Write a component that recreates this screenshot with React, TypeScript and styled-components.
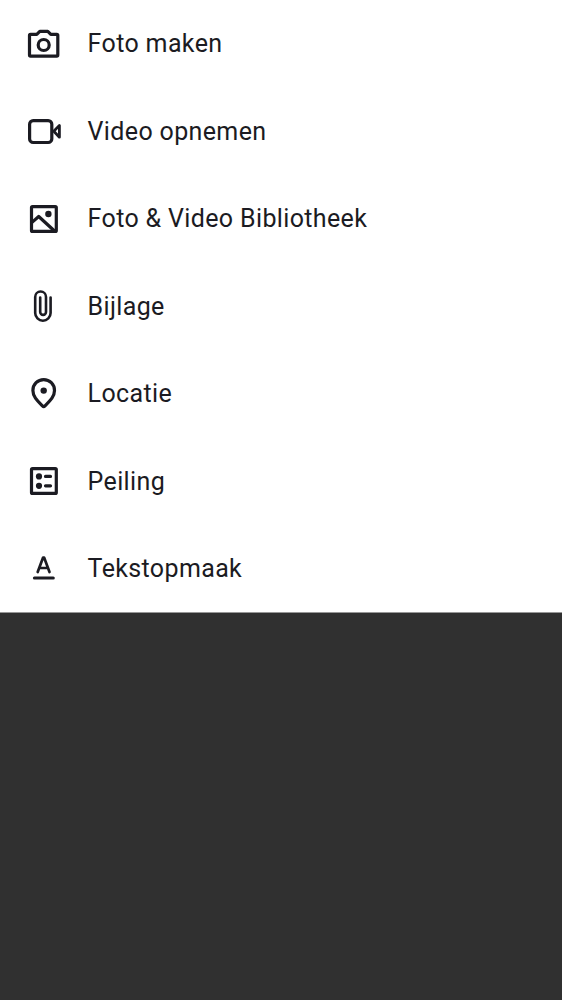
import React from "react";
import styled, { createGlobalStyle } from "styled-components";

const GlobalStyle = createGlobalStyle`
  body { margin: 0; background: #303030; }
`;

const Screen = styled.main`
  min-height: 1000px;
  background: #303030;
  overflow: hidden;
`;

const Sheet = styled.ul`
  box-sizing: border-box;
  height: 613px;
  margin: 0;
  padding: 0;
  list-style: none;
  background: #fff;
  border-bottom: 1px solid #979797;
`;

const Item = styled.li`
  display: flex;
  align-items: center;
  gap: 17.6px;
  height: 87.5px;
  padding-left: 20px;
`;

const Glyph = styled.svg<{ $weight?: number }>`
  flex: none;
  width: 50px;
  height: 50px;
  fill: none;
  stroke: #1b1b22;
  stroke-width: ${(p) => p.$weight ?? 3.2};
  stroke-linecap: round;
  stroke-linejoin: round;
`;

const Dot = styled.circle`
  fill: #1b1b22;
  stroke: none;
`;

const Label = styled.span`
  padding-top: 1.4px;
  color: #1b1b22;
  font: 400 25px/36px Roboto, sans-serif;
  letter-spacing: 0.36px;
  white-space: nowrap;
`;

const actions: { label: string; weight?: number; icon: React.ReactNode }[] = [
  {
    label: "Foto maken",
    icon: (
      <>
        <path d="M10.5 15.3H16.8L19.8 12.4H27.8L30.8 15.3H36.8Q37.8 15.3 37.8 16.3V36.1Q37.8 37.1 36.8 37.1H10.5Q9.5 37.1 9.5 36.1V16.3Q9.5 15.3 10.5 15.3Z" />
        <circle cx="23.7" cy="26" r="5.5" />
      </>
    ),
  },
  {
    label: "Video opnemen",
    icon: (
      <>
        <rect x="9.6" y="14.6" width="22.2" height="21.9" rx="3.6" />
        <path strokeWidth="2.8" d="M39.4 19.4V31.2L33.8 25.3Z" />
      </>
    ),
  },
  {
    label: "Foto & Video Bibliotheek",
    icon: (
      <>
        <rect x="11.5" y="12.6" width="24.8" height="24.8" rx="1" />
        <path d="M11.7 28.6L18.7 22.5L34.8 37.3" />
        <Dot cx="28.4" cy="20" r="3.2" />
      </>
    ),
  },
  {
    label: "Bijlage",
    weight: 2.6,
    icon: (
      <path d="M30.6 16.5V32A7.7 7.7 0 0 1 15.2 32V15.9A5.4 5.4 0 0 1 26 15.9V31A2.9 2.9 0 0 1 20.2 31V16.5" />
    ),
  },
  {
    label: "Locatie",
    icon: (
      <>
        <path d="M23.7 10.6C17.7 10.6 12.9 15.3 12.9 21.5C12.9 28 17.8 32.2 22.4 36.8Q23.7 38.1 25 36.8C29.6 32.2 34.5 28 34.5 21.5C34.5 15.3 29.7 10.6 23.7 10.6Z" />
        <Dot cx="23.7" cy="21.6" r="3.2" />
      </>
    ),
  },
  {
    label: "Peiling",
    icon: (
      <>
        <rect x="11.5" y="12.6" width="24.8" height="24.8" rx="1" />
        <Dot cx="19" cy="20.4" r="3.1" />
        <Dot cx="19" cy="29.8" r="3.1" />
        <path d="M25.5 20.4H30.5M25.5 29.8H30.5" />
      </>
    ),
  },
  {
    label: "Tekstopmaak",
    weight: 2.7,
    icon: (
      <>
        <path d="M17.7 28L23.1 13.5H24.1L29.5 28M19.4 24H27.8" />
        <path strokeWidth="3" d="M14.4 34.1H33.3" />
      </>
    ),
  },
];

export default function App() {
  return (
    <Screen>
      <GlobalStyle />
      <Sheet>
        {actions.map(({ label, weight, icon }) => (
          <Item key={label}>
            <Glyph viewBox="0 0 50 50" $weight={weight} aria-hidden="true">
              {icon}
            </Glyph>
            <Label>{label}</Label>
          </Item>
        ))}
      </Sheet>
    </Screen>
  );
}
